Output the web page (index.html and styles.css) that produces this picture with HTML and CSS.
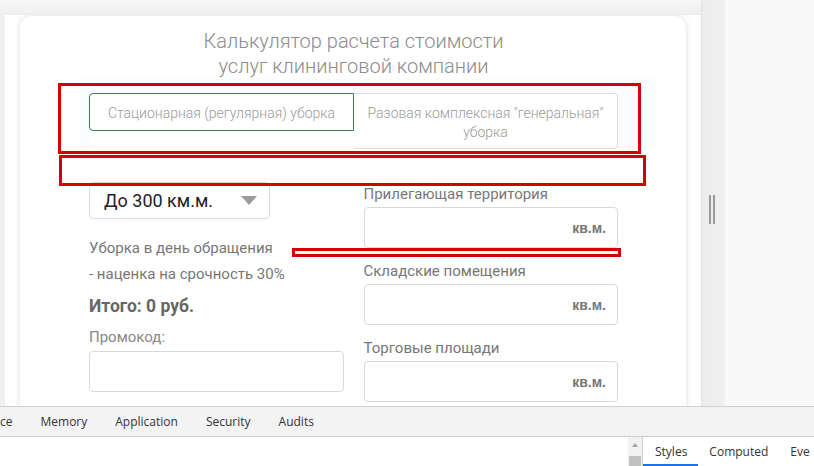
FILE: index.html
```html
<!DOCTYPE html>
<html>
<head>
  <title>Калькулятор клининга</title>
  <link rel="stylesheet" href="styles.css">
</head>
<body>
  <div class="main">
    <div class="viewport">
      <div class="page">
        <div class="card">
          <h1 class="title">Калькулятор расчета стоимости<br>услуг клининговой компании</h1>

          <div class="tab-wrap">
            <div class="tabs">
              <div class="tab active">Стационарная (регулярная) уборка</div>
              <div class="tab">Разовая комплексная "генеральная" уборка</div>
            </div>
          </div>

          <div class="columns">
            <div class="col">
              <div class="select">
                <span>До 300 км.м.</span>
                <span class="arrow"></span>
              </div>
              <p class="note">Уборка в день обращения<br>- наценка на срочность 30%</p>
              <p class="total">Итого: 0 руб.</p>
              <label class="label promo-label">Промокод:</label>
              <div class="box"><input type="text"></div>
            </div>

            <div class="col col-right">
              <div class="field">
                <label class="label">Прилегающая территория</label>
                <div class="box"><input type="text"><span class="unit">кв.м.</span></div>
              </div>
              <div class="field">
                <label class="label">Складские помещения</label>
                <div class="box"><input type="text"><span class="unit">кв.м.</span></div>
              </div>
              <div class="field">
                <label class="label">Торговые площади</label>
                <div class="box"><input type="text"><span class="unit">кв.м.</span></div>
              </div>
            </div>
          </div>

          <div class="mark mark-tabs"></div>
          <div class="mark mark-gap"></div>
          <div class="mark mark-line"></div>
        </div>
      </div>
    </div>
    <div class="splitter">
      <div class="grip"></div>
    </div>
  </div>

  <div class="devtools">
    <div class="tabbar">
      <span class="dt-tab">ce</span>
      <span class="dt-tab">Memory</span>
      <span class="dt-tab">Application</span>
      <span class="dt-tab">Security</span>
      <span class="dt-tab">Audits</span>
    </div>
    <div class="panes">
      <div class="elements"></div>
      <div class="scroll">
        <span class="scroll-up"></span>
        <span class="thumb"></span>
      </div>
      <div class="sidebar">
        <span class="side-tab selected">Styles</span>
        <span class="side-tab">Computed</span>
        <span class="side-tab">Eve</span>
      </div>
    </div>
  </div>
</body>
</html>
```

FILE: styles.css
```css
html, body {
  margin: 0;
  height: 100%;
  overflow: hidden;
}

body {
  background: #f9f9f9;
  font-family: Roboto, "Liberation Sans", sans-serif;
}

.main {
  display: flex;
  height: 406px;
}

.viewport {
  width: 702px;
  flex-shrink: 0;
  background: linear-gradient(to bottom, #f7f7f7, #f0f0f0 14px);
  border-right: 1px solid #e3e3e3;
  box-sizing: border-box;
  display: flex;
  flex-direction: column;
}

.page {
  flex: 1;
  margin: 14px 0 0 5px;
  background: #fff;
  border-top: 1px solid #ececec;
  overflow: hidden;
}

.card {
  position: relative;
  margin: 1px 15px 0 15px;
  height: 420px;
  padding: 13px 68px 0 69px;
  background: #fff;
  border-radius: 12px 12px 0 0;
  box-shadow: 0 0 6px rgba(0, 0, 0, 0.14);
}

.title {
  margin: 0;
  font-size: 20px;
  font-weight: 300;
  line-height: 25px;
  color: #8c8c8c;
  text-align: center;
}

.tab-wrap {
  margin: 0 -38px 0 -9px;
  padding: 14px 38px 0 9px;
  background: #f9fbfc;
}

.tabs {
  display: flex;
  align-items: flex-start;
  background: #fff;
}

.tab {
  flex: 1;
  box-sizing: border-box;
  padding: 10px 12px 6px;
  font-size: 14px;
  font-weight: 300;
  line-height: 19px;
  color: #9a9a9a;
  text-align: center;
  border: 1px solid #dcdcdc;
  border-left: none;
  border-radius: 0 4px 4px 0;
}

.tab.active {
  height: 38px;
  border: 1px solid #3e7a4d;
  border-radius: 4px 0 0 4px;
}

.columns {
  display: flex;
  gap: 20px;
  padding-top: 32px;
}

.col {
  flex: 1;
}

.col-right {
  padding-top: 3px;
}

.select {
  display: flex;
  align-items: center;
  justify-content: space-between;
  width: 181px;
  height: 37px;
  box-sizing: border-box;
  margin-top: 1px;
  padding: 0 12px 0 14px;
  border: 1px solid #dcdcdc;
  border-radius: 4px;
  font-size: 18px;
  color: #222;
}

.arrow {
  width: 0;
  height: 0;
  border-left: 8px solid transparent;
  border-right: 8px solid transparent;
  border-top: 9px solid #9c9c9c;
}

.note {
  margin: 16px 0 0;
  font-size: 15px;
  line-height: 26px;
  color: #777;
}

.total {
  margin: 6px 0 0;
  font-size: 17.5px;
  font-weight: bold;
  line-height: 26px;
  color: #666;
}

.label {
  display: block;
  font-size: 15px;
  line-height: 20px;
  color: #777;
}

.promo-label {
  margin-top: 8px;
  color: #888;
}

.box {
  display: flex;
  align-items: center;
  height: 41px;
  box-sizing: border-box;
  margin-top: 4px;
  padding-right: 11px;
  border: 1px solid #d9d9d9;
  border-radius: 4px;
  background: #fff;
}

.box input {
  flex: 1;
  min-width: 0;
  height: 100%;
  border: none;
  outline: none;
  background: transparent;
}

.unit {
  font-family: "Liberation Sans", Arial, sans-serif;
  font-size: 14px;
  font-weight: bold;
  color: #777;
}

.field {
  margin-bottom: 13px;
}

.field .box {
  margin-top: 3px;
}

/* red annotation frames over the screenshot */
.mark {
  position: absolute;
  box-sizing: border-box;
  border: 3px solid #d60000;
}

.mark-tabs {
  left: 38px;
  top: 67px;
  width: 583px;
  height: 71px;
}

.mark-gap {
  left: 39px;
  top: 139px;
  width: 587px;
  height: 31px;
}

.mark-line {
  left: 272px;
  top: 232px;
  width: 329px;
  height: 9px;
}

.splitter {
  flex: 1;
  position: relative;
  background: linear-gradient(to right, #ececec, #efefef 22px, #f9f9f9 24px);
}

.grip {
  position: absolute;
  left: 7px;
  top: 195px;
  width: 2px;
  height: 29px;
  border-left: 2px solid #999;
  border-right: 2px solid #999;
}

.devtools {
  font-family: "Open Sans", "DejaVu Sans", sans-serif;
  font-size: 12px;
  color: #333;
}

.tabbar {
  display: flex;
  height: 29px;
  align-items: center;
  background: #f3f3f3;
  border-top: 1px solid #d0d0d0;
  border-bottom: 1px solid #cdcdcd;
  white-space: nowrap;
}

.dt-tab {
  padding: 0 14px;
}

.dt-tab:first-child {
  padding-left: 0;
}

.panes {
  display: flex;
  height: 40px;
  background: #fff;
}

.elements {
  width: 628px;
  flex-shrink: 0;
}

.scroll {
  position: relative;
  width: 14px;
  flex-shrink: 0;
  background: #f1f1f1;
}

.scroll-up {
  position: absolute;
  left: 4px;
  top: 6px;
  border-left: 3px solid transparent;
  border-right: 3px solid transparent;
  border-bottom: 4px solid #a3a3a3;
}

.thumb {
  position: absolute;
  left: 1px;
  right: 1px;
  top: 19px;
  bottom: 0;
  background: #c1c1c1;
}

.sidebar {
  flex: 1;
  display: flex;
  align-items: flex-start;
  border-left: 1px solid #d0d0d0;
  white-space: nowrap;
}

.side-tab {
  padding: 6px 11px 0;
  height: 27px;
  box-sizing: border-box;
}

.side-tab.selected {
  padding-left: 12px;
  border-bottom: 3px solid #1a73e8;
  height: 30px;
}
```
